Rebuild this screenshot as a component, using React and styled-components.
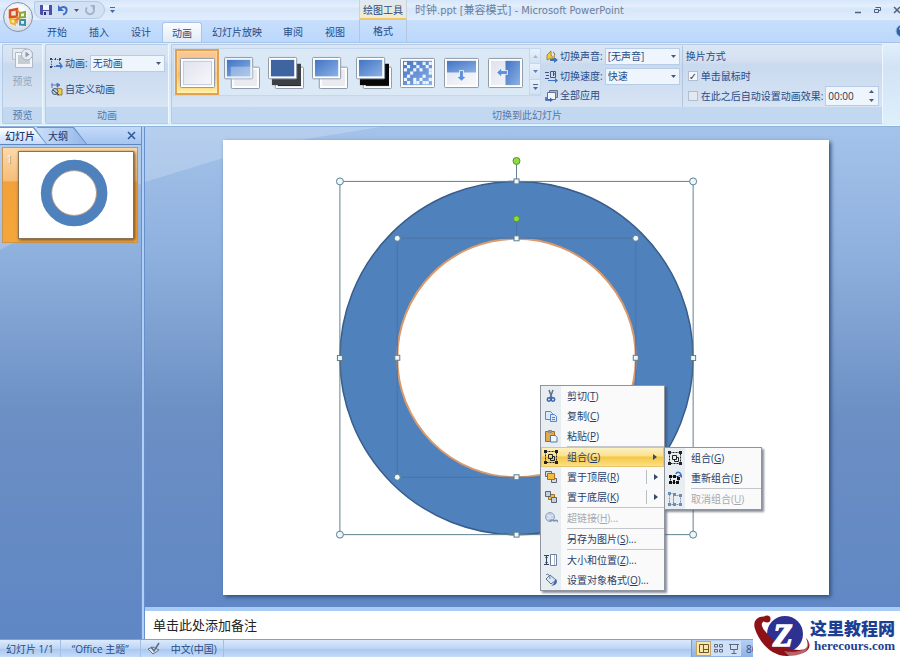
import React from "react";
import styled, { createGlobalStyle, css } from "styled-components";

const GlobalStyle = createGlobalStyle`
  * { box-sizing: border-box; }
  body { margin: 0; }
  body, button, input, select {
    font-family: "Open Sans", "Noto Sans CJK SC", sans-serif;
    font-size: 10px;
    line-height: 14px;
    color: #274b86;
  }
  button { border: 0; padding: 0; background: none; }
  svg { display: block; flex: none; }
`;

/* ---------- frame ---------- */

const Window = styled.div`
  position: relative;
  display: flex;
  flex-direction: column;
  height: 100vh;
  overflow: hidden;
  background: #bfdbff;
`;

const TitleBar = styled.header`
  display: flex;
  height: 20px;
  background: linear-gradient(#d5e6fb, #e4effc 30%, #d6e6fa 45%, #e0edfd);
`;

const TitleLeft = styled.div`
  display: flex;
  align-items: center;
  width: 359px;
  padding-left: 34px;
`;

const QuickBar = styled.div`
  display: flex;
  align-items: center;
  gap: 5px;
  height: 18px;
  padding: 0 8px 0 5px;
  border: 1px solid #b4c9e6;
  border-radius: 2px 9px 9px 9px;
  background: #d3e1f5;
  margin-right: 5px;
`;

const IconButton = styled.button`
  display: flex;
  align-items: center;
  justify-content: center;
`;

const ToolCaption = styled.div`
  width: 48px;
  padding-top: 3px;
  text-align: center;
  white-space: nowrap;
  border: solid #c9d3dd;
  border-width: 0 1px;
  border-bottom: 2px solid #f1c765;
  background: linear-gradient(#dfe9f3, #f3ead0);
`;

const Title = styled.h1`
  margin: 0;
  flex: 1;
  padding: 2px 0 0 8px;
  font-family: "DejaVu Sans Condensed", "Noto Sans CJK SC", sans-serif;
  font-size: 11px;
  line-height: 18px;
  font-weight: 400;
  color: #6b7f9b;
  white-space: nowrap;
`;

const WindowButtons = styled.div`
  display: flex;
  align-items: center;
  gap: 11px;
  margin-right: -2px;
`;

const OfficeButton = styled.button`
  position: absolute;
  left: 3px;
  top: 2px;
  z-index: 2;
  width: 30px;
  height: 30px;
  border-radius: 50%;
  border: 1px solid #8793a8;
  background: radial-gradient(circle at 50% 35%, #ffffff 20%, #d5dce8 75%, #f4f7fb);
  display: flex;
  align-items: center;
  justify-content: center;
`;

const TabBar = styled.nav`
  display: flex;
  align-items: flex-end;
  height: 22px;
  padding-left: 36px;
  background: linear-gradient(#c8dffc, #bad7fd);
`;

const RibbonTab = styled.button`
  height: 20px;
  padding: 0 ${(p) => (p.$long ? "10px" : "11px")};
  white-space: nowrap;
  ${(p) => p.$active && css`
    border: 1px solid #a9c4e8;
    border-bottom: 0;
    padding: 0 9px;
    border-radius: 3px 3px 0 0;
    background: linear-gradient(#fbfdff, #e0ebf8);
  `}
  ${(p) => p.$tool && css`
    height: 22px;
    width: 48px;
    margin-left: 3px;
    border: solid #b5c5db;
    border-width: 0 1px;
  `}
`;

const HelpSlot = styled.div`
  margin: 0 -9px 4px auto;
`;

/* ---------- ribbon ---------- */

const Ribbon = styled.section`
  display: flex;
  gap: 2px;
  height: 84px;
  padding: 1px 17px 1px 2px;
  border-top: 1px solid #a7c3e6;
  border-bottom: 1px solid #eaf8fd;
  background: linear-gradient(#e2effc, #d2e3f6 30%, #ddf0fa);
`;

const Group = styled.section`
  display: flex;
  flex-direction: column;
  flex: ${(p) => (p.$grow ? "1" : "none")};
  min-width: 0;
  width: ${(p) => (p.$width ? p.$width : "auto")};
  border: 1px solid #b3cbe6;
  border-right-color: #f0f7ff;
  border-radius: 2px;
  background: linear-gradient(#dbe6f4, #d5e1f1 20%, #c9d9ee 25%, #dbe8f6);
`;

const GroupBody = styled.div`
  flex: 1;
  display: flex;
  min-width: 0;
  padding: ${(p) => p.$pad || "0"};
`;

const GroupTitle = styled.h2`
  margin: 0;
  height: 16px;
  font-size: 10px;
  line-height: 16px;
  font-weight: 400;
  text-align: center;
  color: #5775a6;
  background: #c2d8f0;
`;

const PreviewButton = styled.button`
  flex: 1;
  display: flex;
  flex-direction: column;
  align-items: center;
  gap: 5px;
  color: #98a3b3;
`;

const Stack = styled.div`
  display: flex;
  flex-direction: column;
  gap: ${(p) => p.$gap || "0"};
  min-width: 0;
`;

const Field = styled.div`
  display: flex;
  align-items: center;
  gap: 2px;
  height: 20px;
  white-space: nowrap;
`;

const CommandButton = styled.button`
  display: flex;
  align-items: center;
  gap: 2px;
  height: 18px;
  white-space: nowrap;
`;

const SelectBox = styled.span`
  display: grid;
  align-items: center;
  width: 75px;
  height: 17px;
  border: 1px solid #b7cce6;
  background: #eff5fd;
  > * { grid-area: 1 / 1; }
  > svg { justify-self: end; margin-right: 3px; pointer-events: none; }
`;

const Select = styled.select`
  appearance: none;
  width: 100%;
  height: 15px;
  padding: 0 2px;
  border: 0;
  background: transparent;
`;

const Gallery = styled.div`
  display: flex;
  width: 368px;
  height: 48px;
  margin-top: 2px;
  border: 1px solid #c5d7ec;
  background: #dbe8f6;
`;

const GalleryItems = styled.div`
  flex: 1;
  display: grid;
  grid-template-columns: repeat(8, 44px);
  padding-left: 1px;
`;

const GalleryItem = styled.button`
  display: flex;
  align-items: center;
  justify-content: center;
  ${(p) => p.$selected && css`
    border: 2px solid #e2a14c;
    background: linear-gradient(#f9c792, #fbc379 45%, #fbb956 55%, #fff0a0);
    box-shadow: inset 0 0 2px #fff;
  `}
`;

const ScrollColumn = styled.div`
  display: grid;
  grid-template-rows: repeat(3, 1fr);
  width: 11px;
  border-left: 1px solid #c5d7ec;
`;

const ScrollButton = styled(IconButton)`
  background: linear-gradient(#e9f1fb, #d2e1f4);
  border-bottom: 1px solid #c5d7ec;
`;

const AdvancePanel = styled.fieldset`
  margin: 0 0 0 2px;
  padding: 0 0 0 3px;
  border: 0;
  border-left: 1px solid #b2c6df;
  min-width: 0;
  flex: 1;
`;

const CheckField = styled.label`
  display: flex;
  align-items: center;
  gap: 3px;
  white-space: nowrap;
`;

const Check = styled.input`
  appearance: none;
  margin: 0 0 0 2px;
  width: 10px;
  height: 10px;
  display: grid;
  place-items: center;
  font: 10px/10px "DejaVu Sans", sans-serif;
  color: #24406e;
  border: 1px solid #aebfd3;
  background: ${(p) => (p.$muted ? "#e6e9ec" : "#f4f7fb")};
  &:checked::after { content: "✓"; }
`;

const Spinner = styled.div`
  display: flex;
  width: 54px;
  height: 20px;
  border: 1px solid #b7cce6;
  background: #eff5fd;
`;

const SpinInput = styled.input`
  flex: 1;
  min-width: 0;
  padding: 0 2px;
  border: 0;
  background: transparent;
  color: #26344e;
`;

const SpinButtons = styled.div`
  display: grid;
  width: 13px;
`;

/* ---------- workspace ---------- */

const Workspace = styled.main`
  position: relative;
  flex: 1;
  min-height: 0;
  display: flex;
  border-top: 1px solid #8fb2dc;
  background: linear-gradient(#a4c3eb, #8eb0dd 25%, #6c8fc4 56%, #5f87c4);
  &::before {
    content: "";
    position: absolute;
    inset: 0;
    background: rgba(255, 255, 255, 0.2);
    clip-path: polygon(0 0, 380px 0, 300px 13px, 223px 31px, 145px 55px, 70px 86px, 0 123px);
  }
`;

const SidePanel = styled.aside`
  position: relative;
  width: 141px;
`;

const SideTabs = styled.div`
  display: flex;
  align-items: center;
  height: 18px;
  border-bottom: 1px solid #5c86bf;
  background: linear-gradient(#c4dafa, #a6c5f0);
`;

const SideTab = styled.button`
  position: relative;
  z-index: ${(p) => (p.$active ? "1" : "0")};
  height: 17px;
  width: ${(p) => (p.$active ? "47px" : "50px")};
  padding-left: ${(p) => (p.$active ? "5px" : "11px")};
  margin-left: ${(p) => (p.$active ? "0" : "-10px")};
  text-align: left;
  white-space: nowrap;
  color: #1c3768;
  font-weight: ${(p) => (p.$active ? "500" : "400")};
  background: #6e95c9;
  clip-path: polygon(0 0, calc(100% - 13px) 0, 100% 100%, 0 100%);
  &::before {
    content: "";
    position: absolute;
    z-index: -1;
    inset: 1px 1px 0 0;
    background: ${(p) => (p.$active ? "linear-gradient(#ffffff, #c4dafa)" : "linear-gradient(100deg, #c9dffb, #94b7e8)")};
    clip-path: polygon(0 0, calc(100% - 13px) 0, 100% 100%, 0 100%);
  }
`;

const CloseButton = styled(IconButton)`
  margin: 0 5px 0 auto;
`;

const ThumbRow = styled.button`
  display: flex;
  width: 136px;
  margin: 2px 0 0 2px;
  padding: 3px 3px 3px 0;
  border: 1px solid #cd944e;
  background: linear-gradient(#fbd9aa, #f6bd78 35%, #f3a13a 36%, #f5a639);
`;

const ThumbNumber = styled.span`
  width: 15px;
  padding-right: 3px;
  line-height: 16px;
  color: #fffbe0;
  text-shadow: 1px 1px 0 #b59a6a;
`;

const Thumb = styled.span`
  flex: 1;
  border: 1px solid #8a7355;
  background: #fff;
  box-shadow: 1px 1px 3px #6d4a1c;
  > svg { width: 100%; }
`;

const Splitter = styled.div`
  position: relative;
  width: 4px;
  border: solid #6990c8;
  border-width: 0 1px 0 1px;
  background: #b0d0fa;
`;

const Editor = styled.section`
  position: relative;
  flex: 1;
  min-width: 0;
  display: flex;
  flex-direction: column;
`;

const Canvas = styled.div`
  flex: 1;
  min-height: 0;
  padding: 13px 71px 12px 78px;
`;

const Slide = styled.div`
  position: relative;
  height: 100%;
  background: #fff;
  box-shadow: 2px 2px 4px #2f4f7d;
`;

const Drawing = styled.svg`
  width: 100%;
  height: 100%;
`;

const Notes = styled.input`
  height: 32px;
  padding: 0 8px;
  border: 0;
  border-top: 4px solid #a9ccf6;
  background: #fff;
  font-size: 13px;
  color: #222;
  &::placeholder { color: #222; opacity: 1; }
`;

/* ---------- menus ---------- */

const Menu = styled.div`
  position: absolute;
  left: ${(p) => p.$left};
  top: ${(p) => p.$top};
  width: ${(p) => p.$width};
  border: 1px solid #8e959e;
  background: linear-gradient(90deg, #e7edf0 20px, #fafafa 20px);
  box-shadow: 2px 2px 2px rgba(60, 70, 90, 0.6);
`;

const MenuItem = styled.button`
  display: flex;
  align-items: center;
  width: 100%;
  height: 20px;
  padding-bottom: 1px;
  white-space: nowrap;
  color: ${(p) => (p.disabled ? "#a5a9ae" : "#25406c")};
  ${(p) => p.$hot && css`
    background: linear-gradient(#fdf3c8, #fbe08e 45%, #f6c744 50%, #fbe38e);
    box-shadow: inset 0 0 0 1px #e8c46a;
  `}
`;

const MenuIcon = styled.span`
  width: 26px;
  padding-left: 3px;
`;

const MenuLabel = styled.span`
  flex: 1;
  text-align: left;
`;

const MenuArrow = styled.span`
  display: flex;
  align-items: center;
  justify-content: center;
  width: 18px;
  height: 14px;
  border-left: ${(p) => (p.$split ? "1px solid #b9bfc7" : "0")};
`;

const MenuRule = styled.hr`
  margin: 0 0 0 26px;
  height: 1px;
  border: 0;
  background: #c3c6ca;
`;

/* ---------- status bar ---------- */

const StatusBar = styled.footer`
  display: flex;
  height: 18px;
  border-top: 1px solid #7da2d6;
  background: linear-gradient(#dceafc, #bdd5f5 50%, #a9c8f2 55%, #c6dcf8);
`;

const StatusCell = styled.div`
  display: flex;
  align-items: center;
  gap: 11px;
  padding: ${(p) => p.$pad || "0 6px"};
  border-right: 1px solid #a3bfe4;
  white-space: nowrap;
`;

const ViewBar = styled.div`
  display: flex;
  align-items: center;
  flex: 0 0 209px;
  margin-left: auto;
  padding-left: 4px;
  border-left: 1px solid #7d9ccb;
  background: linear-gradient(#b5cff3, #8db2e6);
`;

const ViewButton = styled(IconButton)`
  width: 15px;
  height: 15px;
  border: 1px solid ${(p) => (p.$on ? "#c9a65a" : "#cfe0f7")};
  background: ${(p) => (p.$on ? "#fbe7a8" : "#cfe0f7")};
`;

const Zoom = styled.span`
  padding-left: 5px;
`;

const Brand = styled.a`
  position: absolute;
  right: 0;
  bottom: 0;
  display: flex;
  align-items: center;
  height: 43px;
  padding-right: 5px;
  background: #fff;
  text-decoration: none;
  color: #1c3f94;
`;

const BrandText = styled.span`
  display: flex;
  flex-direction: column;
  align-items: flex-end;
`;

const BrandName = styled.span`
  font: 900 17px/20px "Noto Sans CJK SC", sans-serif;
`;

const BrandSite = styled.span`
  font: 700 13px/15px "Liberation Serif", serif;
`;

/* ---------- drawings ---------- */

const Down = ({ color = "#48597a" }) => (
  <svg width="5" height="3" viewBox="0 0 5 3"><path d="M0 0h5L2.5 3z" fill={color} /></svg>
);
const Up = ({ color = "#48597a" }) => (
  <svg width="5" height="3" viewBox="0 0 5 3"><path d="M0 3h5L2.5 0z" fill={color} /></svg>
);

const OfficeLogo = () => (
  <svg width="22" height="22" viewBox="0 0 22 22" fill="none" strokeWidth="2">
    <path d="M13 7l5-1v5l-5 .5z" stroke="#86a93a" fill="#eef7e0" />
    <path d="M3 13l5 .5v5L4 17z" stroke="#f0b63a" fill="#fdf1cf" />
    <path d="M13 14h5v5l-5-.5z" stroke="#3a8fb0" fill="#dcf1f4" />
    <path d="M3 4.500L10 3v7.500L3 11z" stroke="#d9501f" fill="#fbe3d4" strokeWidth="2.500" />
    <path d="M10 4l3 3M10 10l3 5M8 14l5-1M10 10.500v7" stroke="#e2872a" strokeWidth="1.500" />
  </svg>
);

const Save = () => (
  <svg width="12" height="12" viewBox="0 0 12 12">
    <path d="M0 1h12v10H1l-1-1z" fill="#4a4fa8" />
    <path d="M3 1h6v5H3z" fill="#f2f5fb" /><path d="M3 7h6v4H3z" fill="#c9d2ea" /><path d="M4 8h2v3H4z" fill="#27357d" />
  </svg>
);
const Undo = () => (
  <svg width="12" height="12" viewBox="0 0 12 12">
    <path d="M3 4.500C6 2 10 3 9.600 6.500 9.400 8.600 8 10 6 10.500" fill="none" stroke="#3f6fc4" strokeWidth="2" />
    <path d="M1 1v6h6z" fill="#3f6fc4" />
  </svg>
);
const Redo = () => (
  <svg width="12" height="12" viewBox="0 0 12 12">
    <path d="M3 3.500a4 4 0 1 0 6 0" fill="none" stroke="#a3b2c9" strokeWidth="2" />
    <path d="M6 1h5v5z" fill="#a3b2c9" />
  </svg>
);
const More = () => (
  <svg width="5" height="6" viewBox="0 0 5 6"><path d="M0 .5h5" stroke="#48699b" /><path d="M0 3h5L2.500 6z" fill="#48699b" /></svg>
);

const Preview = () => (
  <svg width="22" height="23" viewBox="0 0 22 23">
    <path d="M.5 2.500h14v11H.5z" fill="#e8ecf2" stroke="#b7bfca" />
    <path d="M3.500 6.500h17v15h-17z" fill="#f4f6f9" stroke="#b1b9c5" />
    <path d="M6 9h12v9H6z" fill="#c7cdd6" />
    <circle cx="15" cy="8.500" r="5.500" fill="#e9edf3" stroke="#a7b0be" /><path d="M13.500 5.500l4 3-4 3z" fill="#8f9bad" />
  </svg>
);

const AnimIcon = () => (
  <svg width="13" height="12" viewBox="0 0 13 12">
    <path d="M1.500 2.500h8v7h-8z" fill="none" stroke="#49658f" strokeDasharray="1.500 1.200" />
    <path d="M0 1h2v2H0zM9 1h2v2H9zM0 9h2v2H0zM5 1h1v2H5z" fill="#2d4670" />
    <path d="M6 8h4V5l3 4.500-3 2.500v-2H6z" fill="#4078c4" />
  </svg>
);
const CustomIcon = () => (
  <svg width="13" height="13" viewBox="0 0 13 13">
    <path d="M1 2h6M2 0v5M7 0l3 2-3 2z" stroke="#5373b5" fill="#5373b5" strokeWidth=".9" />
    <path d="M7 5l5 1v6l-5 0z" fill="#f1cf45" stroke="#876c1e" strokeWidth=".8" />
    <circle cx="5" cy="8.500" r="3" fill="#c4cedd" stroke="#3d4d6b" strokeWidth=".9" /><path d="M3 7l6 5" stroke="#273b62" />
  </svg>
);
const SoundIcon = () => (
  <svg width="13" height="13" viewBox="0 0 13 13">
    <path d="M2 10V5l4-4v4l3 4-3-1z" fill="#f0cc3c" stroke="#8d7428" strokeWidth=".8" />
    <path d="M8 2c2 1 2 3 1 5" fill="none" stroke="#8d7428" /><path d="M5 9h4V7l4 3-4 3v-2H5z" fill="#3d71c2" />
  </svg>
);
const SpeedIcon = () => (
  <svg width="13" height="13" viewBox="0 0 13 13" fill="none" stroke="#41577d">
    <path d="M0 2.500h4M1 5.500h3M0 8.500h4M5.500 1.500h5v6h-5zM8 4h3M8.500 2v4" /><path d="M3 10.500h8" stroke="#3d71c2" /><path d="M10 8l3 2.500-3 2.500z" fill="#3d71c2" stroke="none" />
  </svg>
);
const ApplyIcon = () => (
  <svg width="13" height="13" viewBox="0 0 13 13">
    <path d="M4.500 1.500h8v7h-8z" fill="#a9b5c8" stroke="#65748d" /><path d="M2.500 3.500h8v7h-8z" fill="#f4f7fa" stroke="#65748d" />
    <path d="M1 8v3h4" fill="none" stroke="#335fae" strokeWidth="1.500" /><path d="M5 8.500l3 2.500-3 2z" fill="#335fae" />
  </svg>
);

const Card = ({ x, y, w, h, fill, frame = "#fff" }) => (
  <g>
    <rect x={x + 0.5} y={y + 0.5} width={w - 1} height={h - 1} rx="1" fill={frame} stroke="#8c98a8" />
    <rect x={x + 3} y={y + 3} width={w - 6} height={h - 6} fill={fill} />
  </g>
);

const dissolveRows = [
  "1..1..1.1",
  ".1..1..1.",
  "1..1.1..1",
  "..1.....1",
  ".1....1..",
  "1..1.1..1",
  ".1.11.11.",
];

const Transition = ({ kind }) => (
  <svg width="37" height="33" viewBox="0 0 38 34">
    <defs>
      <linearGradient id={`blue-${kind}`} x2="1" y2="1"><stop stopColor="#4274c4" /><stop offset="1" stopColor="#8bb1e6" /></linearGradient>
      <linearGradient id={`gray-${kind}`} x2="1" y2="1"><stop stopColor="#dfe3ee" /><stop offset="1" stopColor="#f8f8fb" /></linearGradient>
    </defs>
    {kind === "none" && (
      <g>
        <Card x={1} y={2} w={36} h={31} fill={`url(#gray-${kind})`} />
        <path d="M4.500 5.500h29v24h-29z" fill="none" stroke="#c3c8d6" />
      </g>
    )}
    {["smooth", "black", "cut", "cutblack"].includes(kind) && (
      <g>
        <Card x={8} y={11} w={30} h={23} fill={kind.includes("black") ? "#25282d" : "#e9ebf0"} />
        {kind.includes("black") && <path d="M5 8h30v22H5z" fill={kind === "black" ? "#3b4046" : "#080808"} />}
        <Card x={1} y={1} w={30} h={23} fill={kind === "black" ? "#3e659f" : `url(#blue-${kind})`} frame={kind === "smooth" ? "#eef4fc" : "#fff"} />
        {kind === "smooth" && <path d="M8 11h23v13H8z" fill="#e3eaf6" opacity=".4" />}
      </g>
    )}
    {kind === "dissolve" && (
      <g>
        <Card x={1} y={2} w={36} h={31} fill={`url(#blue-${kind})`} />
        {dissolveRows.flatMap((row, r) => [...row].map((cell, c) => cell === "1" && (
          <rect key={`${c}-${r}`} x={5 + c * 3.2} y={6 + r * 3.3} width="3.2" height="3.3" fill="#edf3fb" />
        )))}
      </g>
    )}
    {kind === "down" && (
      <g>
        <Card x={1} y={2} w={36} h={31} fill={`url(#gray-${kind})`} />
        <path d="M4 5h30v12H4z" fill={`url(#blue-${kind})`} />
        <path d="M17 15h4v6h3l-5 5-5-5h3z" fill="#5d90dc" stroke="#fff" strokeWidth=".8" />
      </g>
    )}
    {kind === "left" && (
      <g>
        <Card x={1} y={2} w={36} h={31} fill={`url(#gray-${kind})`} />
        <path d="M19 5h15v25H19z" fill={`url(#blue-${kind})`} />
        <path d="M21 15v4h-6v3l-5-5 5-5v3z" fill="#5d90dc" stroke="#fff" strokeWidth=".8" />
      </g>
    )}
  </svg>
);

const GroupGlyph = () => (
  <g>
    <path d="M1.500 1.500h11v11h-11z" fill="none" stroke="#222" strokeDasharray="2 1" />
    <path d="M0 0h3v3H0zM11 0h3v3h-3zM0 11h3v3H0zM11 11h3v3h-3z" fill="#222" />
    <path d="M4.500 4.500h4v4h-4zM8 6.500h2.500v4h-4V8" fill="none" stroke="#222" />
  </g>
);

const glyphs = {
  cut: <g fill="none" stroke="#3b64ac" strokeWidth="1.500"><path d="M5 1l3 8M9 1L6 9" stroke="#5d7191" /><circle cx="5" cy="10.500" r="1.700" /><circle cx="9" cy="10.500" r="1.700" /></g>,
  copy: <g fill="#dbe8fa" stroke="#5b86c8"><path d="M1.500 2.500h5l2 2v6h-7z" /><path d="M6.500 5.500h4l2 2v5h-6z" /><path d="M8 8.500h3M8 10.500h3" /></g>,
  paste: <g><path d="M1.500 2.500h9v10h-9z" fill="#e4a84a" stroke="#9c6d28" /><path d="M4 1h4v3H4z" fill="#8d8f94" /><path d="M6.500 6.500h5l1.500 2v4.500h-6.500z" fill="#f3f7fc" stroke="#5277b0" /></g>,
  group: <GroupGlyph />,
  regroup: <g><path d="M2.500 5.500h8v6h-8z" fill="none" stroke="#222" strokeDasharray="2 1" /><path d="M1 4h3v3H1zM9 6h3v3H9zM1 10h3v3H1zM8 10h3v3H8zM5 4h3v3H5zM5 9h2v4H5z" fill="#111" /><path d="M8 3c1-3 5-2 5 2" fill="none" stroke="#3970c5" strokeWidth="1.500" /><path d="M10 4h4v3z" fill="#3970c5" /></g>,
  ungroup: <g fill="none" stroke="#7a93b5"><path d="M1.500 1.500h4v11h-4zM5.500 3.500h7v9h-7z" strokeDasharray="2 1" /><path d="M0 0h3v3H0zM5 1h3v3H5zM11 2h3v3h-3zM0 11h3v3H0zM5 11h3v3H5zM11 11h3v3h-3z" fill="#6f8bb2" stroke="none" /></g>,
  front: <g><path d="M1.500 1.500h6v5h-6zM7.500 8.500h5v4h-5z" fill="#d6dbe4" stroke="#59647a" /><path d="M3.500 3.500h7v6h-7z" fill="#f5bd3c" stroke="#a3701c" /></g>,
  back: <g><path d="M4.500 4.500h6v5h-6z" fill="#f5bd3c" stroke="#a3701c" /><path d="M1.500 1.500h5v5h-5zM7.500 7.500h5v5h-5z" fill="#c6cfdd" stroke="#59647a" /></g>,
  link: <g><circle cx="6" cy="6" r="4.500" fill="#c3d0e4" stroke="#93a5c1" /><path d="M3 4c3 2 4 1 6 0M3 8c2-2 4-1 6 0" fill="none" stroke="#eef3fa" /><path d="M6 10.500a2 1.500 0 1 1 4 0 2 1.500 0 1 1 4 1" fill="none" stroke="#7e92b4" strokeWidth="1.500" /></g>,
  size: <g fill="none" stroke="#34435c"><path d="M6.500 1.500h6v11h-6z" fill="#fff" stroke="#6d7f9c" /><path d="M2.500 2v10M0 2.500h5M0 11.500h5" /><path d="M10.500 2v10" stroke="#a9b7cc" /><path d="M1 5l1.500-2L4 5zM1 9l1.500 2L4 9z" fill="#34435c" stroke="none" /></g>,
  format: <g><path d="M2 6l4-4 6 5-5 4z" fill="#dce7f5" stroke="#5b7294" /><path d="M2 2c2-2 4 0 4 4" fill="none" stroke="#5b7294" /><path d="M12 6c2 3 1 6-5 7 3-2 3-4 5-7z" fill="#3f69ab" /></g>,
};
const Glyph = ({ name }) => (name ? <svg width="14" height="14" viewBox="0 0 14 14">{glyphs[name]}</svg> : null);

/* ---------- data ---------- */

const mainMenu = [
  { icon: "cut", text: "剪切", mark: "T" },
  { icon: "copy", text: "复制", mark: "C" },
  { icon: "paste", text: "粘贴", mark: "P", rule: true },
  { icon: "group", text: "组合", mark: "G", hot: true, arrow: true },
  { icon: "front", text: "置于顶层", mark: "R", arrow: true, split: true },
  { icon: "back", text: "置于底层", mark: "K", arrow: true, split: true, rule: true },
  { icon: "link", text: "超链接", mark: "H", dots: true, off: true, rule: true },
  { text: "另存为图片", mark: "S", dots: true, rule: true },
  { icon: "size", text: "大小和位置", mark: "Z", dots: true },
  { icon: "format", text: "设置对象格式", mark: "O", dots: true },
];
const subMenu = [
  { icon: "group", text: "组合", mark: "G" },
  { icon: "regroup", text: "重新组合", mark: "E", rule: true },
  { icon: "ungroup", text: "取消组合", mark: "U", off: true },
];

const MenuList = ({ items, ...place }) => (
  <Menu role="menu" {...place}>
    {items.map((m) => (
      <React.Fragment key={m.text}>
        <MenuItem role="menuitem" disabled={m.off} $hot={m.hot}>
          <MenuIcon><Glyph name={m.icon} /></MenuIcon>
          <MenuLabel>{m.text}(<u>{m.mark}</u>){m.dots && "..."}</MenuLabel>
          {m.arrow && (
            <MenuArrow $split={m.split}>
              <svg width="4" height="6" viewBox="0 0 4 6"><path d="M0 0l4 3-4 3z" fill="#33486e" /></svg>
            </MenuArrow>
          )}
        </MenuItem>
        {m.rule && <MenuRule />}
      </React.Fragment>
    ))}
  </Menu>
);

const Dropdown = ({ id, value }) => (
  <SelectBox>
    <Select id={id} defaultValue={value}><option>{value}</option></Select>
    <Down />
  </SelectBox>
);

const frames = [
  { x1: 116.5, y1: 41.5, x2: 470.5, y2: 395.5, top: 21, r: 3.5, line: "#61818f" },
  { x1: 174, y1: 98.5, x2: 413, y2: 338, top: 79, r: 3, line: "#4a74a6" },
];

const SlideDrawing = () => (
  <Drawing viewBox="0 0 606 456" preserveAspectRatio="xMidYMid meet">
    <circle cx="293.500" cy="218.500" r="177" fill="#4f81bd" stroke="#385d8a" strokeWidth="1.500" />
    <circle cx="293.500" cy="218.500" r="119.500" fill="#fff" stroke="#d99a6c" strokeWidth="2" />
    {frames.map((f) => {
      const cx = (f.x1 + f.x2) / 2;
      const cy = (f.y1 + f.y2) / 2;
      return (
        <g key={f.top} stroke={f.line} fill="#edf6fa">
          <rect x={f.x1} y={f.y1} width={f.x2 - f.x1} height={f.y2 - f.y1} fill="none" />
          <path d={`M${cx} ${f.top}V${f.y1}`} />
          <g stroke="#5b7f8d">
            {[[f.x1, f.y1], [f.x2, f.y1], [f.x1, f.y2], [f.x2, f.y2]].map(([x, y]) => <circle key={`${x}-${y}`} cx={x} cy={y} r={f.r} />)}
            {[[cx, f.y1], [cx, f.y2], [f.x1, cy], [f.x2, cy]].map(([x, y]) => <rect key={`${x}-${y}`} x={x - 2.5} y={y - 2.5} width="5" height="5" />)}
            <circle cx={cx} cy={f.top} r={f.r} fill="#8ade3e" stroke="#5b8b3b" />
          </g>
        </g>
      );
    })}
  </Drawing>
);

export default function App() {
  return (
    <Window>
      <GlobalStyle />
      <OfficeButton aria-label="Office"><OfficeLogo /></OfficeButton>
      <TitleBar>
        <TitleLeft>
          <QuickBar>
            <IconButton aria-label="保存"><Save /></IconButton>
            <IconButton aria-label="撤消"><Undo /></IconButton>
            <IconButton aria-label="撤消列表"><Down /></IconButton>
            <IconButton aria-label="恢复"><Redo /></IconButton>
          </QuickBar>
          <IconButton aria-label="自定义快速访问工具栏"><More /></IconButton>
        </TitleLeft>
        <ToolCaption>绘图工具</ToolCaption>
        <Title>时钟.ppt [兼容模式] - Microsoft PowerPoint</Title>
        <WindowButtons>
          <IconButton aria-label="最小化"><svg width="8" height="8" viewBox="0 0 8 8"><path d="M1 6.500h6" stroke="#4c6080" strokeWidth="1.500" /></svg></IconButton>
          <IconButton aria-label="还原"><svg width="9" height="8" viewBox="0 0 9 8"><path d="M2.500 1.500h5v3h-2M1.500 3.500h4v3h-4z" stroke="#4c6080" fill="none" /></svg></IconButton>
          <IconButton aria-label="关闭"><svg width="9" height="8" viewBox="0 0 9 8"><path d="M1 1l6 6M7 1L1 7" stroke="#4c6080" strokeWidth="1.500" /></svg></IconButton>
        </WindowButtons>
      </TitleBar>
      <TabBar>
        {["开始", "插入", "设计", "动画", "幻灯片放映", "审阅", "视图"].map((t) => <RibbonTab key={t} $active={t === "动画"} $long={t.length > 2}>{t}</RibbonTab>)}
        <RibbonTab $tool>格式</RibbonTab>
        <HelpSlot>
          <IconButton aria-label="帮助">
            <svg width="14" height="14" viewBox="0 0 14 14"><circle cx="7" cy="7" r="6" fill="#2d62ac" stroke="#9dbbe2" /><path d="M5 5.500c0-3 4-2.500 4-.5 0 1.500-2 1.500-2 3.500M7 10v1.500" stroke="#fff" fill="none" strokeWidth="1.500" /></svg>
          </IconButton>
        </HelpSlot>
      </TabBar>
      <Ribbon>
        <Group $width="41px">
          <GroupBody $pad="1px 0 0"><PreviewButton disabled><Preview />预览</PreviewButton></GroupBody>
          <GroupTitle>预览</GroupTitle>
        </Group>
        <Group $width="124px">
          <GroupBody $pad="8px 0 0 4px">
            <Stack $gap="7px">
              <Field><AnimIcon /><label htmlFor="anim">动画:</label><Dropdown id="anim" value="无动画" /></Field>
              <CommandButton><CustomIcon />自定义动画</CommandButton>
            </Stack>
          </GroupBody>
          <GroupTitle>动画</GroupTitle>
        </Group>
        <Group $grow>
          <GroupBody $pad="1px 0 0 1px">
            <Gallery>
              <GalleryItems>
                {["none", "smooth", "black", "cut", "cutblack", "dissolve", "down", "left"].map((k) => (
                  <GalleryItem key={k} aria-label={k} $selected={k === "none"}><Transition kind={k} /></GalleryItem>
                ))}
              </GalleryItems>
              <ScrollColumn>
                <ScrollButton aria-label="上一行"><Up color="#a9b6c9" /></ScrollButton>
                <ScrollButton aria-label="下一行"><Down color="#5a83bd" /></ScrollButton>
                <ScrollButton aria-label="其他"><More /></ScrollButton>
              </ScrollColumn>
            </Gallery>
            <GroupBody $pad="0 0 0 4px">
              <Stack>
                <Field><SoundIcon /><label htmlFor="sound">切换声音:</label><Dropdown id="sound" value="[无声音]" /></Field>
                <Field><SpeedIcon /><label htmlFor="speed">切换速度:</label><Dropdown id="speed" value="快速" /></Field>
                <CommandButton><ApplyIcon />全部应用</CommandButton>
              </Stack>
              <AdvancePanel aria-label="换片方式">
                <Field>换片方式</Field>
                <Field><CheckField><Check type="checkbox" defaultChecked />单击鼠标时</CheckField></Field>
                <Field>
                  <CheckField><Check type="checkbox" $muted />在此之后自动设置动画效果:</CheckField>
                  <Spinner>
                    <SpinInput aria-label="时间" defaultValue="00:00" />
                    <SpinButtons><IconButton aria-label="增加"><Up /></IconButton><IconButton aria-label="减少"><Down /></IconButton></SpinButtons>
                  </Spinner>
                </Field>
              </AdvancePanel>
            </GroupBody>
          </GroupBody>
          <GroupTitle>切换到此幻灯片</GroupTitle>
        </Group>
      </Ribbon>
      <Workspace>
        <SidePanel>
          <SideTabs>
            <SideTab $active>幻灯片</SideTab>
            <SideTab>大纲</SideTab>
            <CloseButton aria-label="关闭窗格"><svg width="9" height="9" viewBox="0 0 9 9"><path d="M1 1l7 7M8 1L1 8" stroke="#2f5696" strokeWidth="1.500" /></svg></CloseButton>
          </SideTabs>
          <ThumbRow>
            <ThumbNumber>1</ThumbNumber>
            <Thumb>
              <svg viewBox="0 0 606 456"><circle cx="293" cy="218" r="148" fill="none" stroke="#4f81bd" strokeWidth="58" /><circle cx="293" cy="218" r="119" fill="none" stroke="#b8998a" strokeWidth="5" /></svg>
            </Thumb>
          </ThumbRow>
        </SidePanel>
        <Splitter />
        <Editor>
          <Canvas>
            <Slide>
              <SlideDrawing />
              <MenuList items={mainMenu} $left="317px" $top="245px" $width="125px" />
              <MenuList items={subMenu} $left="441px" $top="307px" $width="98px" />
            </Slide>
          </Canvas>
          <Notes aria-label="备注" placeholder="单击此处添加备注" />
        </Editor>
      </Workspace>
      <StatusBar>
        <StatusCell>幻灯片 1/1</StatusCell>
        <StatusCell $pad="0 11px">“Office 主题”</StatusCell>
        <StatusCell $pad="0 6px">
          <svg width="13" height="13" viewBox="0 0 13 13"><path d="M1 7l5-2 6 3-6 4z" fill="#dfe6f0" stroke="#5f6f88" /><path d="M4 5l3 4 5-8" fill="none" stroke="#5a6c8b" strokeWidth="1.500" /></svg>
          中文(中国)
        </StatusCell>
        <ViewBar>
          <ViewButton $on aria-label="普通视图"><svg width="10" height="9" viewBox="0 0 10 9"><path d="M.5.5h9v8h-9zM4.500.5v8M4 5.500h5" fill="none" stroke="#6d5836" /></svg></ViewButton>
          <ViewButton aria-label="幻灯片浏览"><svg width="9" height="9" viewBox="0 0 9 9"><path d="M.5.5h3v2.500h-3zM5.500.5h3v2.500h-3zM.5 5.500h3v2.500h-3zM5.500 5.500h3v2.500h-3z" fill="none" stroke="#5b6880" /></svg></ViewButton>
          <ViewButton aria-label="幻灯片放映"><svg width="10" height="10" viewBox="0 0 10 10"><path d="M0 .5h10M1.500 1v4.500h7V1M5 6v3M2.500 9.500h5" fill="none" stroke="#5b6880" /></svg></ViewButton>
          <Zoom>86%</Zoom>
        </ViewBar>
      </StatusBar>
      <Brand href="#herecours">
        <svg width="57" height="43" viewBox="0 0 57 43">
          <circle cx="32" cy="20" r="18" fill="#2d3191" />
          <path d="M9 6C2 17 22 40 47 40c10 0 11-7 7-14" fill="none" stroke="#fff" strokeWidth="4" />
          <circle cx="14" cy="5" r="3.500" fill="#8f1118" />
          <path d="M14 3C6 1-1 6 2 15c4 12 15 27 32 27 15 0 25-6 22-13-1-3-2-4-3-5 3 7 2 12-7 12-15 0-27-10-34-19C7 11 8 7 14 7z" fill="#8f1118" />
          <path d="M31 37c14 3 27-2 23-12 5 9-3 18-18 17z" fill="#fff" opacity=".35" />
          <text x="20" y="32" fontFamily="Liberation Serif, serif" fontSize="32" fontWeight="700" fontStyle="italic" fill="#fff" stroke="#fff" strokeWidth="1.500">Z</text>
        </svg>
        <BrandText><BrandName>这里教程网</BrandName><BrandSite>herecours.com</BrandSite></BrandText>
      </Brand>
    </Window>
  );
}
